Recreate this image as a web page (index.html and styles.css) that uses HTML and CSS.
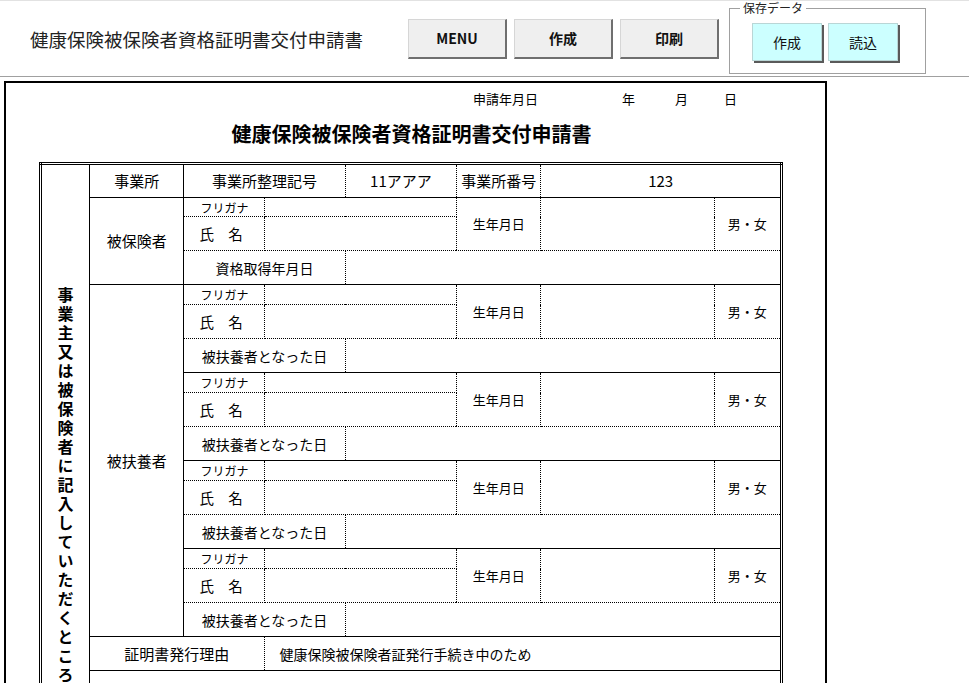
FILE: index.html
```html
<!DOCTYPE html>
<html>
<head>
  <meta charset="utf-8">
  <title>健康保険被保険者資格証明書交付申請書</title>
  <link rel="stylesheet" href="styles.css">
</head>
<body>

<div class="topbar">
  <div class="app-title">健康保険被保険者資格証明書交付申請書</div>
  <div class="actions">
    <button class="btn">MENU</button>
    <button class="btn">作成</button>
    <button class="btn">印刷</button>
  </div>
  <fieldset class="savebox">
    <legend>保存データ</legend>
    <div class="save-btns">
      <button class="btn-save">作成</button>
      <button class="btn-save">読込</button>
    </div>
  </fieldset>
</div>

<div class="sheet">
  <div class="apply-date">
    <span class="ad-label">申請年月日</span><span class="ad-y">年</span><span class="ad-m">月</span><span>日</span>
  </div>
  <h1 class="sheet-title">健康保険被保険者資格証明書交付申請書</h1>

  <table class="form">
    <colgroup>
      <col style="width:49px"><col style="width:94px"><col style="width:80px"><col style="width:81px">
      <col style="width:111px"><col style="width:84px"><col style="width:173px"><col style="width:67px">
    </colgroup>
    <tr class="h34">
      <td class="side" rowspan="20"><div class="side-text">事業主又は被保険者に記入していただくところ</div></td>
      <td>事業所</td>
      <td colspan="2" class="vd">事業所整理記号</td>
      <td class="vd">11アアア</td>
      <td class="vd">事業所番号</td>
      <td colspan="2">123</td>
    </tr>

    <!-- 被保険者 -->
    <tr class="h19">
      <td rowspan="3">被保険者</td>
      <td class="furi vd hd">フリガナ</td>
      <td colspan="2" class="vd hd"></td>
      <td rowspan="2" class="sm vd hd">生年月日</td>
      <td rowspan="2" class="vd hd"></td>
      <td rowspan="2" class="sm hd">男・女</td>
    </tr>
    <tr class="h34">
      <td class="name vd hd">氏　名</td>
      <td colspan="2" class="vd hd"></td>
    </tr>
    <tr class="h34">
      <td colspan="2" class="md vd">資格取得年月日</td>
      <td colspan="4"></td>
    </tr>

    <!-- 被扶養者 1 -->
    <tr class="h20">
      <td rowspan="12">被扶養者</td>
      <td class="furi vd hd">フリガナ</td>
      <td colspan="2" class="vd hd"></td>
      <td rowspan="2" class="sm vd hd">生年月日</td>
      <td rowspan="2" class="vd hd"></td>
      <td rowspan="2" class="sm hd">男・女</td>
    </tr>
    <tr class="h34">
      <td class="name vd hd">氏　名</td>
      <td colspan="2" class="vd hd"></td>
    </tr>
    <tr class="h34">
      <td colspan="2" class="md vd">被扶養者となった日</td>
      <td colspan="4"></td>
    </tr>

    <!-- 被扶養者 2 -->
    <tr class="h20">
      <td class="furi vd hd">フリガナ</td>
      <td colspan="2" class="vd hd"></td>
      <td rowspan="2" class="sm vd hd">生年月日</td>
      <td rowspan="2" class="vd hd"></td>
      <td rowspan="2" class="sm hd">男・女</td>
    </tr>
    <tr class="h34">
      <td class="name vd hd">氏　名</td>
      <td colspan="2" class="vd hd"></td>
    </tr>
    <tr class="h34">
      <td colspan="2" class="md vd">被扶養者となった日</td>
      <td colspan="4"></td>
    </tr>

    <!-- 被扶養者 3 -->
    <tr class="h20">
      <td class="furi vd hd">フリガナ</td>
      <td colspan="2" class="vd hd"></td>
      <td rowspan="2" class="sm vd hd">生年月日</td>
      <td rowspan="2" class="vd hd"></td>
      <td rowspan="2" class="sm hd">男・女</td>
    </tr>
    <tr class="h34">
      <td class="name vd hd">氏　名</td>
      <td colspan="2" class="vd hd"></td>
    </tr>
    <tr class="h34">
      <td colspan="2" class="md vd">被扶養者となった日</td>
      <td colspan="4"></td>
    </tr>

    <!-- 被扶養者 4 -->
    <tr class="h20">
      <td class="furi vd hd">フリガナ</td>
      <td colspan="2" class="vd hd"></td>
      <td rowspan="2" class="sm vd hd">生年月日</td>
      <td rowspan="2" class="vd hd"></td>
      <td rowspan="2" class="sm hd">男・女</td>
    </tr>
    <tr class="h34">
      <td class="name vd hd">氏　名</td>
      <td colspan="2" class="vd hd"></td>
    </tr>
    <tr class="h34">
      <td colspan="2" class="md vd">被扶養者となった日</td>
      <td colspan="4"></td>
    </tr>

    <tr class="h34">
      <td colspan="2" class="vd">証明書発行理由</td>
      <td colspan="5" class="reason">健康保険被保険者証発行手続き中のため</td>
    </tr>
    <tr class="h34"><td colspan="7"></td></tr>
    <tr class="h34"><td colspan="7"></td></tr>
    <tr class="h34"><td colspan="7"></td></tr>
  </table>
</div>

</body>
</html>
```

FILE: styles.css
```css
html, body {
  background: #fff;
}
body {
  margin: 0;
  font-family: "Noto Sans CJK JP", "Noto Sans", sans-serif;
  color: #000;
}

/* header */
.topbar {
  box-sizing: border-box;
  height: 77px;
  display: flex;
  align-items: center;
  border-top: 1px solid #e2e2e2;
  border-bottom: 1px solid #a0a0a0;
}
.app-title {
  box-sizing: border-box;
  width: 408px;
  padding-left: 30px;
  font-size: 18.5px;
  line-height: 24px;
  color: #222;
}
.actions {
  display: flex;
  gap: 7px;
}
.btn {
  box-sizing: border-box;
  width: 99px;
  height: 40px;
  padding: 0;
  background: #efefef;
  border: 1px solid #d6d6d6;
  border-right: 2px solid #6f6f6f;
  border-bottom: 2px solid #6f6f6f;
  font-family: "Noto Sans CJK JP", "Noto Sans", sans-serif;
  font-size: 14px;
  font-weight: bold;
  color: #111;
}
.savebox {
  box-sizing: border-box;
  align-self: flex-start;
  width: 197px;
  height: 73px;
  margin: 0 0 0 10px;
  padding: 8px 10px 0 22px;
  border: 1px solid #a0a0a0;
}
.savebox legend {
  margin-left: -12px;
  padding: 0 3px;
  font-size: 12px;
  line-height: 14px;
  color: #222;
}
.save-btns {
  display: flex;
  gap: 6px;
}
.btn-save {
  box-sizing: border-box;
  width: 70px;
  height: 38px;
  padding: 0;
  background: #ccffff;
  border: 1px solid #b9d6d6;
  box-shadow: 2px 2px 0 #5a5a5a;
  font-family: "Noto Sans CJK JP", "Noto Sans", sans-serif;
  font-size: 14px;
  color: #111;
}

/* sheet */
.sheet {
  box-sizing: border-box;
  width: 823px;
  margin: 4px 0 0 4px;
  border: 2px solid #000;
  padding-bottom: 20px;
}
.apply-date {
  padding: 8px 0 0 467px;
  font-size: 13px;
  line-height: 16px;
  display: flex;
}
.ad-label {
  width: 149px;
}
.ad-y {
  width: 53px;
}
.ad-m {
  width: 49px;
}
.sheet-title {
  margin: 15px 0 0;
  padding-right: 8px;
  text-align: center;
  font-size: 20px;
  line-height: 24px;
  font-weight: bold;
}

.form {
  margin: 16px 0 0 33px;
  width: 744px;
  table-layout: fixed;
  border-collapse: collapse;
  border: 3px double #000;
}
.form td {
  padding: 0;
  border: none;
  border-right: 1px solid #000;
  border-bottom: 1px solid #000;
  text-align: center;
  font-size: 15px;
  line-height: 18px;
  white-space: nowrap;
  overflow: hidden;
}
.form td.vd {
  border-right-style: dotted;
}
.form td.hd {
  border-bottom-style: dotted;
}
.h19 { height: 19px; }
.h20 { height: 20px; }
.h34 { height: 34px; }

.form td.furi {
  text-align: left;
  padding-left: 16px;
  font-size: 12px;
  line-height: 13px;
}
.form td.name {
  text-align: left;
  padding-left: 15px;
  font-size: 14.5px;
}
.form td.sm {
  font-size: 13px;
}
.form td.md {
  font-size: 14px;
}
.form td.reason {
  text-align: left;
  padding-left: 15px;
  font-size: 14px;
}
.form td.side {
  vertical-align: top;
  padding-top: 122px;
}
.side-text {
  writing-mode: vertical-rl;
  text-orientation: upright;
  margin: 0 auto;
  font-size: 16px;
  line-height: 16px;
  letter-spacing: 3px;
  font-weight: bold;
}
```
